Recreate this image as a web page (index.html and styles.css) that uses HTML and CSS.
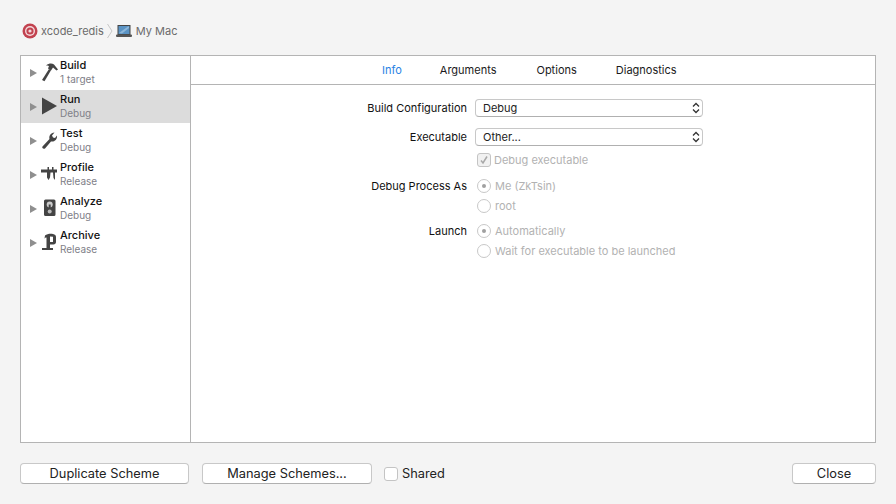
FILE: index.html
```html
<!DOCTYPE html>
<html lang="en">
<head>
<meta charset="utf-8">
<title>Scheme editor</title>
<link rel="stylesheet" href="styles.css">
</head>
<body>
<div class="window">
  <header class="crumbs">
    <svg class="crumb-icon" width="16" height="16" viewBox="0 0 16 16"><circle cx="8" cy="8" r="7.5" fill="#c2424f"/><circle cx="8" cy="8" r="5" fill="#f3d9dc"/><circle cx="8" cy="8" r="3.6" fill="#c2424f"/><circle cx="8" cy="8" r="1.6" fill="#f3d9dc"/></svg>
    <span class="crumb">xcode_redis</span>
    <svg class="crumb-sep" width="6" height="16" viewBox="0 0 6 16"><path d="M.5 1l4.500 7-4.500 7" fill="none" stroke="#c8c8c8"/></svg>
    <svg class="crumb-icon" width="16" height="12" viewBox="0 0 16 12"><rect x="2" y=".5" width="12" height="9" fill="#5a93c4" stroke="#444"/><path d="M3 8l9-6.500h1V3L6 8.500z" fill="#8db7da"/><rect x="0" y="9.500" width="16" height="2.500" rx="1" fill="#555"/></svg>
    <span class="crumb crumb-last">My Mac</span>
  </header>

  <main class="panel">
    <nav class="sidebar">
      <div class="action">
        <span class="disclosure"></span>
        <svg class="action-icon" width="20" height="20" viewBox="0 0 20 20"><path d="M2 18l7-11 2 1.300-6.500 11z" fill="#444"/><path d="M6 3.500c3-2.500 6-2.500 8-1l4 5-1.500 1-3.500-3-2 3-3-2 1-2.500c-1-.5-2-.5-3-.5z" fill="#444"/></svg>
        <div class="action-text"><span class="action-name">Build</span><span class="action-sub">1 target</span></div>
      </div>
      <div class="action selected">
        <span class="disclosure"></span>
        <svg class="action-icon" width="20" height="20" viewBox="0 0 20 20"><path d="M2 1.500l15 8.500-15 8.500z" fill="#444"/></svg>
        <div class="action-text"><span class="action-name">Run</span><span class="action-sub">Debug</span></div>
      </div>
      <div class="action">
        <span class="disclosure"></span>
        <svg class="action-icon" width="20" height="20" viewBox="0 0 20 20"><path d="M2.500 16.500l7-7.500c-.8-3 1-6 5-6.500l-2.500 3 1 2 2 .5 2-2.500c.5 4-2.500 6.500-6 6l-6 7c-1.500 1-3.500-.5-2.500-2z" fill="#444"/></svg>
        <div class="action-text"><span class="action-name">Test</span><span class="action-sub">Debug</span></div>
      </div>
      <div class="action">
        <span class="disclosure"></span>
        <svg class="action-icon" width="20" height="20" viewBox="0 0 20 20"><path d="M1 5.500h6.500V3h1.500v2.500h3V3h1.500v2.500H17v3h-2v7.500l-1.500-2-.5-5.500h-2.500l-.5 5-1.500 2.500-1.500-2.500V8.500H1z" fill="#444"/></svg>
        <div class="action-text"><span class="action-name">Profile</span><span class="action-sub">Release</span></div>
      </div>
      <div class="action">
        <span class="disclosure"></span>
        <svg class="action-icon" width="20" height="20" viewBox="0 0 20 20"><path d="M5.500 1.500h8.500a1.500 1.500 0 0 1 1.500 1.500v13.500A1.500 1.500 0 0 1 14 18H5.500A1.500 1.500 0 0 1 4 16.500V3a1.500 1.500 0 0 1 1.500-1.500z" fill="#444"/><circle cx="9.700" cy="6.500" r="3" fill="#ccc"/><rect x="8.700" y="6.500" width="2" height="3.500" fill="#444"/><circle cx="9.700" cy="13.500" r="2" fill="#bbb"/></svg>
        <div class="action-text"><span class="action-name">Analyze</span><span class="action-sub">Debug</span></div>
      </div>
      <div class="action">
        <span class="disclosure"></span>
        <svg class="action-icon" width="20" height="20" viewBox="0 0 20 20"><path d="M5 3.500C7 2 10 1.500 13 2c2 .3 3 1.500 3 3v5c0 1.500-1 2.500-2.500 2.500H10V16h3v2H2v-2h4.500V5.500C5.500 5.500 5 6 4.500 6.500zM10 4.500V10h3V4.700z" fill="#444" fill-rule="evenodd"/></svg>
        <div class="action-text"><span class="action-name">Archive</span><span class="action-sub">Release</span></div>
      </div>
    </nav>

    <section class="detail">
      <div class="tabs">
        <span class="tab active">Info</span>
        <span class="tab">Arguments</span>
        <span class="tab">Options</span>
        <span class="tab">Diagnostics</span>
      </div>
      <div class="form">
        <div class="row row-select">
          <span class="label">Build Configuration</span>
          <div class="select"><span>Debug</span>
            <svg class="updown" width="8" height="12" viewBox="0 0 8 12"><path d="M1 4.500L4 1.500l3 3M1 7.500l3 3 3-3" fill="none" stroke="#333" stroke-width="1.300"/></svg>
          </div>
        </div>
        <div class="row row-select row-exec">
          <span class="label">Executable</span>
          <div class="select"><span>Other...</span>
            <svg class="updown" width="8" height="12" viewBox="0 0 8 12"><path d="M1 4.500L4 1.500l3 3M1 7.500l3 3 3-3" fill="none" stroke="#333" stroke-width="1.300"/></svg>
          </div>
        </div>
        <div class="row row-check">
          <span class="label"></span>
          <div class="option option-check">
            <span class="box checked"><svg width="10" height="10" viewBox="0 0 10 10"><path d="M2 5.500l2 2.500 4-6.500" fill="none" stroke="#a8a8a8" stroke-width="1.500"/></svg></span>
            <span>Debug executable</span>
          </div>
        </div>
        <div class="row row-radio row-group">
          <span class="label">Debug Process As</span>
          <div class="option"><span class="radio on"></span><span>Me (ZkTsin)</span></div>
        </div>
        <div class="row row-radio">
          <span class="label"></span>
          <div class="option"><span class="radio"></span><span>root</span></div>
        </div>
        <div class="row row-radio row-group2">
          <span class="label">Launch</span>
          <div class="option"><span class="radio on"></span><span>Automatically</span></div>
        </div>
        <div class="row row-radio">
          <span class="label"></span>
          <div class="option"><span class="radio"></span><span>Wait for executable to be launched</span></div>
        </div>
      </div>
    </section>
  </main>

  <footer class="footer">
    <button class="btn btn-wide" type="button">Duplicate Scheme</button>
    <button class="btn btn-wide" type="button">Manage Schemes...</button>
    <div class="shared"><span class="box box-shared"></span><span>Shared</span></div>
    <button class="btn btn-close" type="button">Close</button>
  </footer>
</div>
</body>
</html>
```
FILE: styles.css
```css
* { box-sizing: border-box; }
html, body { margin: 0; height: 100%; }
body {
  background: #f4f4f4;
  color: #1a1a1a;
  font-family: Inter, "Liberation Sans", sans-serif;
  font-size: 11px;
  overflow: hidden;
}
.window {
  width: 896px;
  height: 504px;
  padding: 0 20px;
  display: flex;
  flex-direction: column;
}
.crumbs {
  height: 55px;
  padding: 7px 0 0 2px;
  display: flex;
  align-items: center;
  color: #6b6b6b;
}
.crumb-icon { flex: none; }
.crumb { margin-left: 3px; }
.crumb-last { margin-left: 4px; }
.crumb-sep { margin: 0 3px; flex: none; }

.panel {
  height: 388px;
  background: #fff;
  border: 1px solid #b4b4b4;
  display: flex;
}
.sidebar {
  width: 170px;
  flex: none;
  border-right: 1px solid #b4b4b4;
}
.action {
  height: 34px;
  padding-left: 9px;
  display: flex;
  align-items: center;
}
.action.selected {
  background: linear-gradient(#dcdcdc, #dcdcdc) no-repeat;
  background-size: 100% 33px;
}
.disclosure {
  width: 0;
  height: 0;
  border-left: 7px solid #8f8f8f;
  border-top: 4.5px solid transparent;
  border-bottom: 4.5px solid transparent;
  margin-top: -1px;
  flex: none;
}
.action-icon { margin: -2px 0 0 3px; flex: none; }
.action-text {
  margin-top: -2px;
  display: flex;
  flex-direction: column;
  line-height: 14px;
}
.action-name { color: #111; font-weight: 500; }
.action-sub { color: #808088; font-size: 10px; }

.detail { flex: 1; display: flex; flex-direction: column; }
.tabs {
  height: 29px;
  border-bottom: 1px solid #b4b4b4;
  display: flex;
  align-items: center;
}
.tab:nth-child(1) { margin-left: 191px; }
.tab:nth-child(2) { margin-left: 38px; }
.tab:nth-child(3) { margin-left: 40px; }
.tab:nth-child(4) { margin-left: 39px; }
.tab.active { color: #2a82e4; }

.form { padding-top: 13px; }
.row {
  display: grid;
  grid-template-columns: 276px 228px;
  column-gap: 8px;
  align-items: center;
}
.label { text-align: right; color: #111; }
.row-select { height: 20px; }
.row-exec { margin-top: 9px; }
.row-check { height: 16px; margin-top: 5px; }
.row-radio { height: 16px; }
.row-group { margin-top: 10px; }
.row-radio + .row-radio { margin-top: 4px; }
.row .option { color: #b2b2b2; }
.form .row-group2 { margin-top: 9px; }
.select {
  height: 18px;
  background: #fff;
  border: 1px solid #c8c8c8;
  border-bottom-color: #b0b0b0;
  border-radius: 4px;
  display: flex;
  align-items: center;
  justify-content: space-between;
  padding: 0 2px 0 7px;
  color: #222;
}
.option {
  display: flex;
  align-items: center;
  gap: 4px;
  padding-left: 2px;
}
.option-check { gap: 3px; }
.box {
  width: 14px;
  height: 14px;
  border: 1px solid #c4c4c4;
  border-radius: 3px;
  background: #fff;
  display: flex;
  align-items: center;
  justify-content: center;
  flex: none;
}
.box.checked { background: #f1f1f1; }
.radio {
  width: 14px;
  height: 14px;
  border: 1px solid #c8c8c8;
  border-radius: 50%;
  background: #fff;
  flex: none;
  display: flex;
  align-items: center;
  justify-content: center;
}
.radio.on::after {
  content: "";
  width: 4px;
  height: 4px;
  border-radius: 50%;
  background: #a0a0a0;
}

.footer {
  margin-top: 20px;
  display: flex;
  align-items: center;
}
.btn {
  height: 21px;
  padding: 0;
  background: #fff;
  border: 1px solid #c8c8c8;
  border-bottom-color: #b0b0b0;
  border-radius: 4px;
  font: inherit;
  font-size: 12.8px;
  color: #222;
}
.btn-wide { width: 169px; }
.btn-wide + .btn-wide { margin-left: 13px; width: 170px; }
.shared {
  margin-left: 12px;
  display: flex;
  align-items: center;
  gap: 4px;
  font-size: 12.8px;
  color: #222;
}
.box-shared { background: #fff; }
.btn-close { width: 84px; margin-left: auto; }
```
